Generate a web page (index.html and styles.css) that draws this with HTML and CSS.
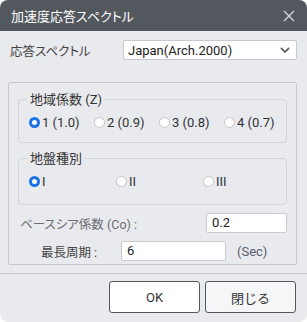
FILE: index.html
```html
<!DOCTYPE html>
<html lang="ja">
  <head>
    <meta charset="UTF-8" />
    <title>加速度応答スペクトル</title>
    <link rel="stylesheet" href="styles.css">
  </head>
  <body>
    <div class="dialog">
      <div class="titlebar">
        <span class="title">加速度応答スペクトル</span>
        <svg class="close" width="12" height="12" viewBox="0 0 12 12">
          <path d="M1 1 L11 11 M11 1 L1 11" stroke="#d8dadd" stroke-width="1.2" fill="none" />
        </svg>
      </div>

      <div class="content">
        <div class="spectrum-row">
          <label class="spectrum-label">応答スペクトル</label>
          <div class="select">
            <span>Japan(Arch.2000)</span>
            <svg width="10" height="6" viewBox="0 0 10 6">
              <path d="M1 1 L5 5 L9 1" stroke="#666" stroke-width="1.8" fill="none" />
            </svg>
          </div>
        </div>

        <div class="panel">
          <fieldset class="group">
            <legend>地域係数 (Z)</legend>
            <div class="radios zone">
              <label class="radio"><span class="dot checked"></span>1 (1.0)</label>
              <label class="radio"><span class="dot"></span>2 (0.9)</label>
              <label class="radio"><span class="dot"></span>3 (0.8)</label>
              <label class="radio"><span class="dot"></span>4 (0.7)</label>
            </div>
          </fieldset>

          <fieldset class="group soil-group">
            <legend>地盤種別</legend>
            <div class="radios soil">
              <label class="radio"><span class="dot checked"></span>I</label>
              <label class="radio"><span class="dot"></span>II</label>
              <label class="radio"><span class="dot"></span>III</label>
            </div>
          </fieldset>

          <div class="field-row base-shear">
            <span class="field-label">ベースシア係数 (Co) :</span>
            <div class="input">0.2</div>
          </div>

          <div class="field-row period">
            <span class="field-label dark">最長周期 :</span>
            <div class="input wide">6</div>
            <span class="unit">(Sec)</span>
          </div>
        </div>
      </div>

      <div class="footer">
        <button class="btn">OK</button>
        <button class="btn close-btn">閉じる</button>
      </div>
    </div>
  </body>
</html>
```

FILE: styles.css
```css
body {
  margin: 0;
  background-color: #fff;
  font-family: Roboto, 'Noto Sans CJK JP', sans-serif;
  font-size: 12.5px;
  font-feature-settings: 'palt';
  color: #333;
}
.dialog {
  width: 307px;
  height: 322px;
  background-color: #e9eaee;
  border-radius: 8px;
  overflow: hidden;
  display: flex;
  flex-direction: column;
}
.titlebar {
  height: 31px;
  background-color: #53585f;
  display: flex;
  align-items: center;
  justify-content: space-between;
  padding: 0 12px 0 11px;
  flex-shrink: 0;
}
.title {
  color: #fff;
  font-size: 13px;
}
.content {
  padding: 9px 10px 0 8px;
}
.spectrum-row {
  display: flex;
  align-items: center;
  height: 20px;
}
.spectrum-label {
  padding-left: 2px;
  width: 113px;
  color: #444;
}
.select {
  flex: 1;
  height: 18px;
  background-color: #fff;
  border: 1px solid #c8cacf;
  border-radius: 2px;
  display: flex;
  align-items: center;
  justify-content: space-between;
  padding: 0 6px 0 4px;
  font-size: 13px;
  color: #222;
}
.panel {
  margin-top: 22px;
  border: 1px solid #c6c8cc;
  border-radius: 2px;
  height: 183px;
  box-sizing: border-box;
  padding: 8px 9px 0 9px;
}
.group {
  margin: 0;
  min-width: 0;
  border: 1px solid #d3d5d9;
  border-radius: 4px;
  padding: 0 8px 6px 10px;
}
.soil-group {
  margin-top: 7px;
  padding-bottom: 9px;
}
.group legend {
  padding: 0 3px;
  margin-left: -2px;
  line-height: 17px;
  font-size: 13px;
  color: #333;
}
.radios {
  display: flex;
  align-items: center;
  height: 28px;
}
.zone .radio {
  width: 65px;
}
.soil .radio {
  width: 87px;
}
.radios .radio:last-child {
  width: auto;
}
.radio {
  display: flex;
  align-items: center;
  gap: 2px;
  font-size: 13px;
  color: #2f3236;
  white-space: nowrap;
}
.dot {
  width: 9px;
  height: 9px;
  border: 1px solid #c4c6ca;
  border-radius: 50%;
  background-color: #fff;
  flex-shrink: 0;
}
.dot.checked {
  width: 5px;
  height: 5px;
  border: 3px solid #1a73e8;
}
.field-row {
  display: flex;
  align-items: center;
  height: 20px;
}
.base-shear {
  margin-top: 8px;
  justify-content: space-between;
  padding-left: 2px;
}
.period {
  margin-top: 8px;
  padding-left: 23px;
}
.field-label {
  color: #6b6d72;
}
.field-label.dark {
  color: #444;
  width: 80px;
}
.input {
  width: 74px;
  height: 18px;
  line-height: 18px;
  background-color: #fff;
  border: 1px solid #c8cacf;
  border-radius: 2px;
  padding-left: 5px;
  font-size: 13px;
  color: #222;
}
.input.wide {
  width: 98px;
}
.unit {
  margin-left: 11px;
  font-size: 13px;
  color: #5a6070;
}
.footer {
  margin-top: 8px;
  border-top: 1px solid #c6c8cc;
  display: flex;
  justify-content: flex-end;
  gap: 5px;
  padding: 7px 11px 0 0;
}
.btn {
  width: 91px;
  height: 32px;
  background-color: #fff;
  border: 1px solid #54575c;
  border-radius: 3px;
  font-family: Roboto, 'Noto Sans CJK JP', sans-serif;
  font-size: 13px;
  color: #333;
}
.close-btn {
  background-color: #f5f6f8;
}
```
